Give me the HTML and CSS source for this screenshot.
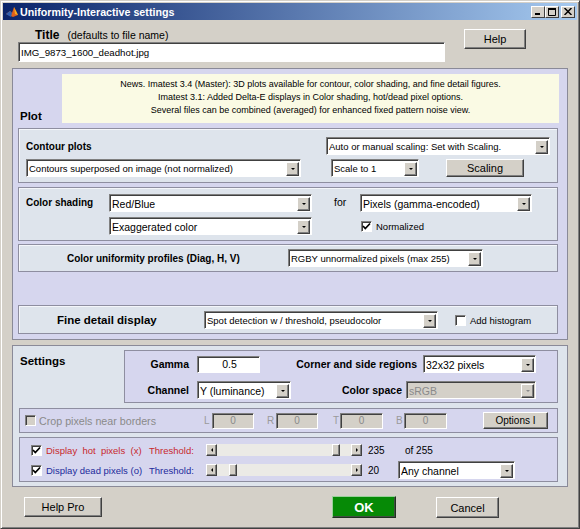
FILE: index.html
```html
<html>
  <head>
    <title>Uniformity-Interactive settings</title>
    <link rel="stylesheet" href="styles.css">
  </head>
  <body>
    <div class="win">
      <!-- Barra del titolo -->
      <div class="titlebar">
        <svg class="appicon" viewBox="0 0 12 12">
          <path d="M0 8 L4 5 L6 7 L8 1 L12 9 L7 11 Z" fill="#e0601a"/>
          <path d="M0 8 L4 5 L6 7 L5 11 Z" fill="#2f5fb0"/>
          <path d="M8 1 L12 9 L9 8 Z" fill="#f4b020"/>
        </svg>
        <span class="caption">Uniformity-Interactive settings</span>
        <div class="caps">
          <span class="cap"><svg width="8" height="8" viewBox="0 0 8 8"><rect x="1" y="5" width="5" height="2" fill="#000"/></svg></span>
          <span class="cap"><svg width="9" height="8" viewBox="0 0 9 8"><path d="M0.5 0.5 H7.5 V7.5 H0.5 Z" fill="none" stroke="#000"/><rect x="0" y="0" width="8" height="2" fill="#000"/></svg></span>
          <span class="cap cap-close"><svg width="8" height="7" viewBox="0 0 8 7"><path d="M0.5 0 L7.5 7 M7.5 0 L0.5 7" stroke="#000" stroke-width="1.5"/></svg></span>
        </div>
      </div>

      <!-- Titolo e Help -->
      <div class="top">
        <div class="title-col">
          <div class="title-lbl"><b>Title</b>(defaults to file name)</div>
          <div class="field field-title">IMG_9873_1600_deadhot.jpg</div>
        </div>
        <div class="btn btn-help">Help</div>
      </div>

      <!-- Pannello Plot -->
      <div class="panel plot">
        <div class="plot-head">
          <div class="sec-lbl plot-lbl">Plot</div>
          <div class="news">
            News. Imatest 3.4 (Master): 3D plots available for contour, color shading, and fine detail figures.<br>
            Imatest 3.1: Added Delta-E displays in Color shading, hot/dead pixel options.<br>
            Several files can be combined (averaged) for enhanced fixed pattern noise view.
          </div>
        </div>

        <div class="sub contour">
          <div class="row">
            <div class="lbl contour-lbl">Contour plots</div>
            <div class="dd dd-auto f9"><span class="txt">Auto or manual scaling: Set with Scaling.</span><span class="arr"></span></div>
          </div>
          <div class="row row-b">
            <div class="dd dd-contour f9"><span class="txt">Contours superposed on image (not normalized)</span><span class="arr"></span></div>
            <div class="dd dd-scale f9"><span class="txt">Scale to 1</span><span class="arr"></span></div>
            <div class="btn btn-scaling">Scaling</div>
          </div>
        </div>

        <div class="sub shade">
          <div class="lbl shade-lbl">Color shading</div>
          <div class="col">
            <div class="dd dd-red f10"><span class="txt">Red/Blue</span><span class="arr"></span></div>
            <div class="dd dd-red f10"><span class="txt">Exaggerated color</span><span class="arr"></span></div>
          </div>
          <div class="for">for</div>
          <div class="col">
            <div class="dd dd-pixels f10"><span class="txt">Pixels (gamma-encoded)</span><span class="arr"></span></div>
            <div class="check-row">
              <span class="chk"><svg width="9" height="9" viewBox="0 0 9 9"><path d="M1 4 L3.3 6.5 L8 1.5" stroke="#000" stroke-width="1.7" fill="none"/></svg></span>
              <span class="chk-lbl">Normalized</span>
            </div>
          </div>
        </div>

        <div class="sub unif">
          <div class="lbl unif-lbl">Color uniformity profiles (Diag, H, V)</div>
          <div class="dd dd-rgby f9"><span class="txt">RGBY unnormalized pixels (max 255)</span><span class="arr"></span></div>
        </div>

        <div class="sub fine">
          <div class="lbl fine-lbl">Fine detail display</div>
          <div class="dd dd-spot f9"><span class="txt">Spot detection w / threshold, pseudocolor</span><span class="arr"></span></div>
          <span class="chk chk-hist"></span>
          <span class="chk-lbl">Add histogram</span>
        </div>
      </div>

      <!-- Pannello Settings -->
      <div class="panel settings">
        <div class="set-top">
          <div class="sec-lbl set-lbl">Settings</div>
          <div class="set-box">
            <div class="set-row">
              <span class="lbl g-lbl">Gamma</span>
              <div class="field field-gamma">0.5</div>
              <span class="lbl c-lbl">Corner and side regions</span>
              <div class="dd dd-corner f10"><span class="txt">32x32 pixels</span><span class="arr"></span></div>
            </div>
            <div class="set-row">
              <span class="lbl g-lbl">Channel</span>
              <div class="dd dd-channel f10"><span class="txt">Y (luminance)</span><span class="arr"></span></div>
              <span class="lbl c-lbl c-lbl2">Color space</span>
              <div class="dd dd-space dd-off f10"><span class="txt">sRGB</span><span class="arr"></span></div>
            </div>
          </div>
        </div>

        <div class="crop">
          <span class="chk chk-off"></span>
          <span class="crop-lbl">Crop pixels near borders</span>
          <span class="edge">L</span><div class="field field-off">0</div>
          <span class="edge edge-r">R</span><div class="field field-off">0</div>
          <span class="edge edge-t">T</span><div class="field field-off field-wide">0</div>
          <span class="edge edge-b">B</span><div class="field field-off field-wide">0</div>
          <div class="btn btn-options">Options I</div>
        </div>

        <div class="hot">
          <div class="hot-row">
            <span class="chk"><svg width="9" height="9" viewBox="0 0 9 9"><path d="M1 4 L3.3 6.5 L8 1.5" stroke="#000" stroke-width="1.7" fill="none"/></svg></span>
            <span class="hot-lbl red">Display&nbsp; hot&nbsp; pixels&nbsp; (x)</span>
            <span class="thr red">Threshold:</span>
            <div class="slider">
              <span class="sb-btn sb-left"></span>
              <div class="track"><span class="thumb" style="margin-left: 115px"></span></div>
              <span class="sb-btn sb-right"></span>
            </div>
            <span class="val">235</span>
            <span class="of">of 255</span>
          </div>
          <div class="hot-row hot-row2">
            <span class="chk"><svg width="9" height="9" viewBox="0 0 9 9"><path d="M1 4 L3.3 6.5 L8 1.5" stroke="#000" stroke-width="1.7" fill="none"/></svg></span>
            <span class="hot-lbl blue">Display dead pixels (o)</span>
            <span class="thr blue">Threshold:</span>
            <div class="slider">
              <span class="sb-btn sb-left"></span>
              <div class="track"><span class="thumb" style="margin-left: 12px"></span></div>
              <span class="sb-btn sb-right"></span>
            </div>
            <span class="val val2">20</span>
            <div class="dd dd-any f10"><span class="txt">Any channel</span><span class="arr"></span></div>
          </div>
        </div>
      </div>

      <!-- Pulsanti in basso -->
      <div class="btns">
        <div class="btn btn-helppro">Help Pro</div>
        <div class="btn btn-ok">OK</div>
        <div class="btn btn-cancel">Cancel</div>
      </div>
    </div>
  </body>
</html>
```

FILE: styles.css
```css
body {
  margin: 0;
  font-family: "Liberation Sans", Arial, sans-serif;
  color: #000;
}

.win {
  width: 580px;
  height: 529px;
  box-sizing: border-box;
  background: #d4d0c8;
  border: 1px solid;
  border-color: #d4d0c8 #404040 #404040 #d4d0c8;
  box-shadow: inset 1px 1px #fff, inset -1px -1px #808080;
  padding: 2px;
}

/* barra del titolo */
.titlebar {
  height: 17px;
  display: flex;
  align-items: center;
  padding: 0 2px;
  background: linear-gradient(to right, #0a246a, #a6caf0);
}

.appicon {
  width: 12px;
  height: 12px;
  margin-left: 1px;
}

.caption {
  color: #fff;
  font-weight: bold;
  font-size: 10.7px;
  margin-left: 2px;
  white-space: nowrap;
}

.caps {
  margin-left: auto;
  display: flex;
}

.cap {
  width: 14px;
  height: 12px;
  box-sizing: border-box;
  background: #d4d0c8;
  border: 1px solid;
  border-color: #fff #404040 #404040 #fff;
  display: flex;
  align-items: center;
  justify-content: center;
}

.cap-close {
  margin-left: 2px;
}

/* controlli generici */
.btn {
  box-sizing: border-box;
  background: #d4d0c8;
  border: 1px solid;
  border-color: #fff #404040 #404040 #fff;
  box-shadow: inset -1px -1px #808080;
  display: flex;
  align-items: center;
  justify-content: center;
  font-size: 11px;
  white-space: nowrap;
}

.field {
  box-sizing: border-box;
  background: #fff;
  border: 1px solid;
  border-color: #808080 #fff #fff #808080;
  box-shadow: inset 1px 1px #404040;
  display: flex;
  align-items: center;
  padding-left: 2px;
  white-space: nowrap;
}

.dd {
  box-sizing: border-box;
  height: 18px;
  background: #fff;
  border: 1px solid;
  border-color: #808080 #fff #fff #808080;
  box-shadow: inset 1px 1px #404040;
  display: flex;
  align-items: center;
  padding: 1px 1px 0 2px;
}

.dd .txt {
  flex: 1;
  white-space: nowrap;
  overflow: hidden;
}

.dd .arr {
  width: 13px;
  height: 14px;
  box-sizing: border-box;
  background: #d4d0c8;
  border: 1px solid;
  border-color: #fff #404040 #404040 #fff;
  box-shadow: inset -1px -1px #808080;
  display: flex;
  align-items: center;
  justify-content: center;
}

.dd .arr::after {
  content: "";
  border-left: 2px solid transparent;
  border-right: 2px solid transparent;
  border-top: 2px solid #000;
}

.dd-off {
  background: #d4d0c8;
  color: #8a8a8a;
}

.dd-off .arr::after {
  border-top-color: #8a8a8a;
}

.f9 {
  font-size: 9.5px;
}

.f10 {
  font-size: 10.5px;
}

.chk {
  width: 11px;
  height: 11px;
  box-sizing: border-box;
  background: #fff;
  border: 1px solid;
  border-color: #808080 #fff #fff #808080;
  box-shadow: inset 1px 1px #404040;
  display: flex;
  align-items: center;
  justify-content: center;
  flex-shrink: 0;
}

.chk-off {
  background: #d4d0c8;
}

.chk-lbl {
  font-size: 9.5px;
  margin-left: 4px;
  white-space: nowrap;
}

.lbl {
  font-weight: bold;
  font-size: 10px;
  white-space: nowrap;
}

.sec-lbl {
  font-weight: bold;
  font-size: 11.5px;
}

/* parte alta */
.top {
  display: flex;
  align-items: flex-start;
  padding: 8px 51px 0 15px;
}

.title-col {
  width: 427px;
}

.title-lbl {
  height: 14px;
  line-height: 14px;
  padding-left: 17px;
  font-size: 10.5px;
  white-space: nowrap;
}

.title-lbl b {
  font-size: 12px;
  margin-right: 8px;
}

.field-title {
  height: 20px;
  font-size: 9.7px;
}

.btn-help {
  margin-top: 1px;
  margin-left: auto;
  width: 62px;
  height: 20px;
}

/* pannelli */
.panel {
  border: 1px solid #8a8a98;
}

.plot {
  margin: 6px 9px 0;
  padding-bottom: 5px;
  background: #d6d6ee;
}

.plot-head {
  display: flex;
  align-items: flex-end;
  margin-top: 5px;
}

.plot-lbl {
  width: 42px;
  padding-left: 7px;
  line-height: 14px;
}

.news {
  flex: 1;
  margin-right: 8px;
  height: 49px;
  box-sizing: border-box;
  padding-top: 4px;
  background: #fafae4;
  text-align: center;
  font-size: 9px;
  line-height: 13px;
  white-space: nowrap;
}

.sub {
  margin: 4px 9px 0 5px;
  background: #dee4ec;
  border: 1px solid #8e8ea0;
  box-shadow: inset 1px 1px #f4f6fa;
}

.row {
  display: flex;
  align-items: center;
}

.contour {
  margin-top: 5px;
  padding: 8px 0 5px;
}

.contour-lbl {
  flex: 1;
  padding-left: 7px;
}

.dd-auto {
  width: 224px;
  margin-right: 7px;
}

.row-b {
  margin-top: 4px;
}

.dd-contour {
  width: 275px;
  margin-left: 7px;
}

.dd-scale {
  width: 88px;
  margin-left: 30px;
}

.btn-scaling {
  width: 78px;
  height: 18px;
  margin-left: 27px;
}

.shade {
  display: flex;
  align-items: flex-start;
  padding: 6px 0 5px;
}

.shade-lbl {
  width: 83px;
  padding-left: 7px;
  line-height: 18px;
}

.col {
  display: flex;
  flex-direction: column;
  gap: 5px;
}

.dd-red {
  width: 203px;
}

.for {
  width: 26px;
  margin-left: 22px;
  line-height: 16px;
  font-size: 10.5px;
}

.dd-pixels {
  width: 172px;
}

.check-row {
  display: flex;
  align-items: center;
  height: 18px;
  padding-left: 1px;
}

.unif {
  display: flex;
  align-items: center;
  margin-top: 3px;
  padding: 4px 0;
}

.unif-lbl {
  width: 221px;
  padding-left: 48px;
}

.dd-rgby {
  width: 195px;
}

.fine {
  display: flex;
  align-items: center;
  margin-top: 33px;
  padding: 5px 0 4px;
}

.fine-lbl {
  width: 147px;
  padding-left: 38px;
  font-size: 11.5px;
}

.dd-spot {
  width: 234px;
}

.chk-hist {
  margin-left: 17px;
}

/* settings */
.settings {
  margin: 5px 9px 0;
  padding-bottom: 4px;
  background: #dee4ec;
}

.set-top {
  display: flex;
  align-items: flex-start;
  margin-top: 4px;
}

.set-lbl {
  width: 104px;
  padding: 5px 0 0 7px;
}

.set-box {
  width: 434px;
  height: 53px;
  box-sizing: border-box;
  padding-top: 4px;
  background: #d6d6ee;
  border: 1px solid #8e8ea0;
}

.set-row {
  display: flex;
  align-items: center;
  height: 18px;
}

.set-row + .set-row {
  margin-top: 8px;
}

.g-lbl {
  width: 64px;
  margin-right: 8px;
  text-align: right;
  font-size: 10.5px;
}

.field-gamma {
  width: 63px;
  height: 17px;
  justify-content: center;
  font-size: 10.5px;
}

.c-lbl {
  flex: 1;
  margin-right: 6px;
  text-align: right;
  font-size: 10.5px;
}

.c-lbl2 {
  margin-right: 4px;
}

.dd-corner {
  width: 113px;
  margin-right: 21px;
}

.dd-channel {
  width: 94px;
}

.dd-space {
  width: 130px;
  margin-right: 21px;
}

.crop {
  display: flex;
  align-items: center;
  height: 25px;
  box-sizing: border-box;
  margin: 5px 9px 0 6px;
  padding-left: 5px;
  background: #d6d6ee;
  border: 1px solid #8e8ea0;
}

.crop-lbl {
  width: 165px;
  margin-left: 3px;
  font-size: 10.7px;
  color: #8a8a8a;
  white-space: nowrap;
}

.edge {
  width: 8px;
  font-size: 10px;
  color: #9a9a9a;
}

.edge-r {
  margin-left: 13px;
  width: 9px;
}

.edge-t {
  margin-left: 15px;
  width: 7px;
}

.edge-b {
  margin-left: 13px;
}

.field-off {
  width: 42px;
  height: 16px;
  justify-content: center;
  padding-left: 0;
  background: #d4d0c8;
  color: #8a8a8a;
  font-size: 10px;
}

.field-wide {
  width: 43px;
}

.btn-options {
  width: 65px;
  height: 17px;
  margin-left: 36px;
  font-size: 10px;
}

.hot {
  margin: 4px 9px 0 6px;
  padding: 6px 0 2px 11px;
  background: #d6d6ee;
  border: 1px solid #8e8ea0;
}

.hot-row {
  display: flex;
  align-items: center;
  height: 12px;
}

.hot-row2 {
  height: 18px;
  margin-top: 5px;
}

.hot-lbl {
  width: 103px;
  margin-left: 4px;
  font-size: 9.5px;
  white-space: nowrap;
}

.thr {
  width: 57px;
  font-size: 9.5px;
}

.red {
  color: #c8282c;
}

.blue {
  color: #1c2a9c;
}

.slider {
  display: flex;
  width: 156px;
  height: 12px;
}

.sb-btn {
  width: 11px;
  height: 12px;
  box-sizing: border-box;
  background: #d4d0c8;
  border: 1px solid;
  border-color: #fff #404040 #404040 #fff;
  box-shadow: inset -1px -1px #808080;
  display: flex;
  align-items: center;
  justify-content: center;
}

.sb-left::after {
  content: "";
  border-top: 2px solid transparent;
  border-bottom: 2px solid transparent;
  border-right: 2px solid #000;
}

.sb-right::after {
  content: "";
  border-top: 2px solid transparent;
  border-bottom: 2px solid transparent;
  border-left: 2px solid #000;
}

.track {
  flex: 1;
  display: flex;
  background: #ebeae6;
}

.thumb {
  width: 8px;
  height: 12px;
  box-sizing: border-box;
  background: #d4d0c8;
  border: 1px solid;
  border-color: #fff #404040 #404040 #fff;
  box-shadow: inset -1px -1px #808080;
}

.val {
  width: 37px;
  margin-left: 6px;
  font-size: 10px;
}

.val2 {
  width: 30px;
}

.of {
  font-size: 10px;
}

.dd-any {
  width: 117px;
}

/* pulsanti in basso */
.btns {
  display: flex;
  align-items: flex-start;
  margin-top: 10px;
}

.btn-helppro {
  width: 78px;
  height: 20px;
  margin-left: 21px;
}

.btn-ok {
  width: 64px;
  height: 22px;
  margin-left: 230px;
  margin-top: -1px;
  background: #068a06;
  color: #fff;
  font-weight: bold;
  font-size: 13px;
  border-color: #9ad09a #203020 #203020 #9ad09a;
  box-shadow: inset -1px -1px #405040;
}

.btn-cancel {
  width: 63px;
  height: 21px;
  margin-left: 40px;
}
```
